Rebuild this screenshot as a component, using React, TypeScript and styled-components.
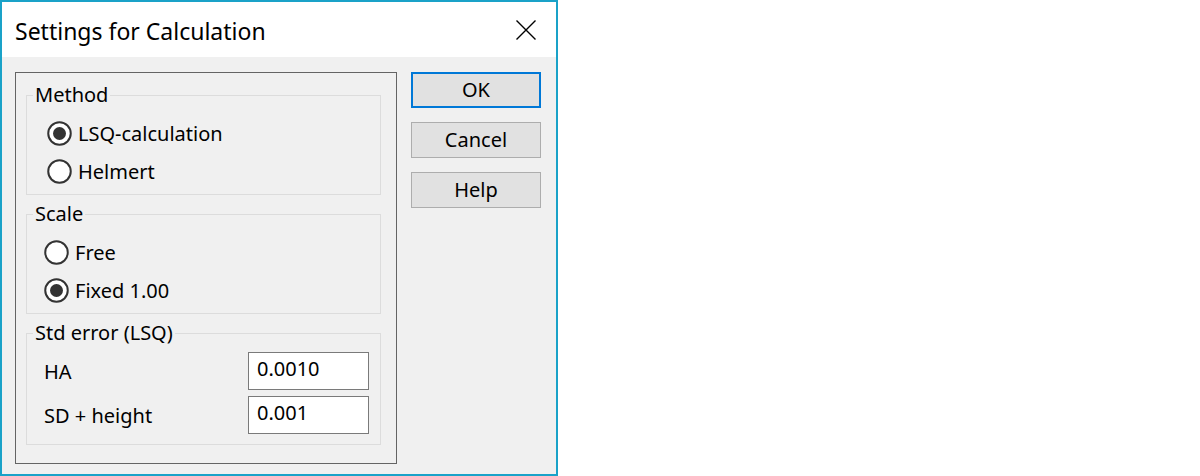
import React from "react";
import styled, { createGlobalStyle } from "styled-components";

const GlobalStyle = createGlobalStyle`
  html, body { margin: 0; padding: 0; background: #ffffff; }
  body { font-family: "Noto Sans", "Open Sans", Arial, sans-serif; color: #000; }
  * { box-sizing: border-box; }
`;

const Window = styled.div`
  width: 558px;
  height: 476px;
  border: 2px solid #1aa2c8;
  display: flex;
  flex-direction: column;
  background: #f0f0f0;
`;

const TitleBar = styled.div`
  height: 55px;
  flex: none;
  background: #ffffff;
  display: flex;
  align-items: center;
  justify-content: space-between;
  padding: 0 19px 0 13px;
`;

const TitleText = styled.div`
  font-size: 23px;
  line-height: 28px;
  margin-top: 2px;
`;

const CloseButton = styled.button`
  width: 22px;
  height: 22px;
  padding: 0;
  border: none;
  background: transparent;
  display: flex;
  align-items: center;
  justify-content: center;
`;

const Body = styled.div`
  flex: 1;
  display: flex;
  align-items: flex-start;
  gap: 14px;
  padding: 15px 0 0 13px;
`;

const Frame = styled.div`
  width: 382px;
  height: 392px;
  border: 1px solid #646464;
  padding: 22px 15px 0 10px;
  display: flex;
  flex-direction: column;
  gap: 19px;
`;

const Group = styled.div<{ $h: number }>`
  position: relative;
  height: ${(p) => p.$h}px;
  border: 1px solid #dcdcdc;
  padding-top: 18px;
`;

const Legend = styled.span`
  position: absolute;
  top: -14px;
  left: 6px;
  padding: 0 2px;
  background: #f0f0f0;
  font-size: 20px;
  line-height: 26px;
`;

const RadioRow = styled.label<{ $indent: number }>`
  height: 38px;
  display: flex;
  align-items: center;
  gap: 6px;
  padding-left: ${(p) => p.$indent}px;
  font-size: 20px;
`;

const FieldRow = styled.div`
  height: 38px;
  display: flex;
  align-items: center;
  justify-content: space-between;
  padding: 0 11px 0 17px;
  font-size: 20px;
  & + & { margin-top: 6px; }
`;

const TextBox = styled.div`
  width: 121px;
  height: 38px;
  border: 1px solid #7a7a7a;
  background: #ffffff;
  font-size: 20px;
  line-height: 32px;
  padding-left: 8px;
`;

const ButtonColumn = styled.div`
  display: flex;
  flex-direction: column;
  gap: 14px;
`;

const Button = styled.button<{ $default?: boolean }>`
  width: 130px;
  height: 36px;
  background: #e1e1e1;
  border: ${(p) => (p.$default ? "2px solid #0078d7" : "1px solid #adadad")};
  font-family: "Noto Sans", "Open Sans", Arial, sans-serif;
  font-size: 20px;
  line-height: 26px;
  color: #000;
  padding: 0;
`;

const Radio: React.FC<{ checked?: boolean }> = ({ checked }) => (
  <svg width="25" height="25" viewBox="0 0 25 25">
    <circle cx="12.5" cy="12.5" r="11.25" fill="#fff" stroke="#333" strokeWidth="2" />
    {checked && <circle cx="12.5" cy="12.5" r="6.5" fill="#333" />}
  </svg>
);

export default function App() {
  return (
    <>
      <GlobalStyle />
      <Window>
        <TitleBar>
          <TitleText>Settings for Calculation</TitleText>
          <CloseButton aria-label="Close">
            <svg width="20" height="20" viewBox="0 0 20 20">
              <path d="M0.5 0.5 L19.5 19.5 M19.5 0.5 L0.5 19.5" stroke="#000" strokeWidth="1.4" />
            </svg>
          </CloseButton>
        </TitleBar>
        <Body>
          <Frame>
            <Group $h={100}>
              <Legend>Method</Legend>
              <RadioRow $indent={20}>
                <Radio checked />
                LSQ-calculation
              </RadioRow>
              <RadioRow $indent={20}>
                <Radio />
                Helmert
              </RadioRow>
            </Group>
            <Group $h={100}>
              <Legend>Scale</Legend>
              <RadioRow $indent={17}>
                <Radio />
                Free
              </RadioRow>
              <RadioRow $indent={17}>
                <Radio checked />
                Fixed 1.00
              </RadioRow>
            </Group>
            <Group $h={112}>
              <Legend>Std error (LSQ)</Legend>
              <FieldRow>
                <span>HA</span>
                <TextBox>0.0010</TextBox>
              </FieldRow>
              <FieldRow>
                <span>SD + height</span>
                <TextBox>0.001</TextBox>
              </FieldRow>
            </Group>
          </Frame>
          <ButtonColumn>
            <Button $default>OK</Button>
            <Button>Cancel</Button>
            <Button>Help</Button>
          </ButtonColumn>
        </Body>
      </Window>
    </>
  );
}
